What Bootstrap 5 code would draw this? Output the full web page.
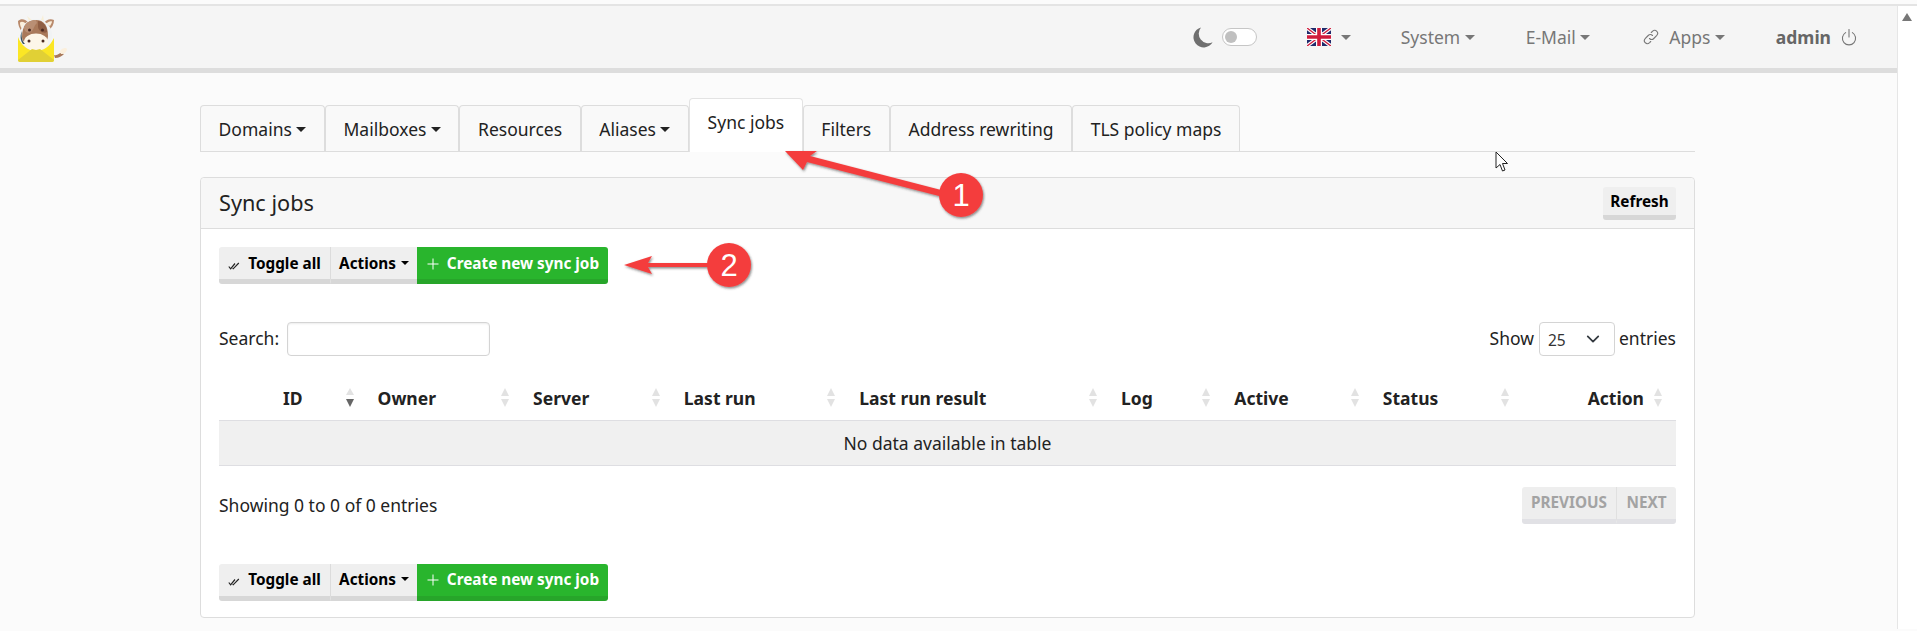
<!DOCTYPE html>
<html lang="en">
<head>
<meta charset="utf-8">
<title>Sync jobs</title>
<link href="https://cdn.jsdelivr.net/npm/bootstrap@5.3.0/dist/css/bootstrap.min.css" rel="stylesheet">
<style>
html,body{height:631px;overflow:hidden;}
body{font-family:"Noto Sans",sans-serif;font-size:17.5px;color:#222;background:#fbfbfb;padding-top:4px;position:relative;}
.shell{border-top:2px solid #e4e4e4;height:625px;}
.pagecol{width:1897px;}
.sbar{width:20px;background:#fff;border-left:1px solid #e6e6e6;padding-top:7px;}
.sbar-up{width:0;height:0;border-left:5.5px solid transparent;border-right:5.5px solid transparent;border-bottom:8px solid #777;margin-left:4px;}
.topbar{height:67px;background:#f5f5f5;border-bottom:5px solid #ddd;padding:0;}
.topbar .navbar-nav .nav-link{color:#777;padding:0;line-height:22px;}
.logo{margin-left:16px;display:block;}
.navright{margin-right:40px;}
.moon{margin-right:9px;}
.fake-toggle{width:35px;height:18px;border:1.5px solid #c6c6c6;border-radius:9px;background:#fff;padding:2px;margin-right:50px;}
.fake-toggle i{display:block;width:12px;height:12px;border-radius:50%;background:#c0c0c0;}
.flagwrap{margin-right:50px;}
.flagwrap .dropdown-toggle::after{margin-left:10px;vertical-align:.15em;border-top-width:5.5px;border-left-width:5px;border-right-width:5px;}
.m-sys{margin-right:51px;}
.m-mail{margin-right:53px;}
.m-apps{margin-right:51px;}
.apps-ico{margin-right:10px;}
.power-ico{margin-left:10px;}
.topbar .navbar-nav .adm{font-weight:700;color:#666;}
.tabs-wrap{margin:33px 202px 0 200px;}
.tabs-line{border-bottom:1px solid #ddd;height:46px;gap:0;align-items:flex-end;flex-wrap:nowrap;}
.tabs-line .nav-link{height:46px;padding:0 17.6px;line-height:46px;background:#f9f9f9;border:1px solid #ddd;border-bottom:0;border-radius:4px 4px 0 0;color:#222;margin:0;white-space:nowrap;}
.tabs-line .nav-link.active{height:54px;margin-bottom:-1px;background:#fff;padding-bottom:8px;color:#222;border-color:#e3e3e3;}
.panel{margin-top:25px;border:1px solid #ddd;border-radius:4px;background:#fff;height:441px;}
.panel-head{height:51px;background:#f7f7f7;border-bottom:1px solid #ddd;padding:9px 18px 0;border-radius:4px 4px 0 0;}
.panel-title{font-size:21.7px;line-height:32px;margin:0;font-weight:400;}
.panel-main{padding:18px 18px 0;}
.tb{font-weight:700;font-size:15.3px;line-height:31px;height:37px;padding:0 10px;border:0;border-bottom:5px solid #d7d7d7;background:#efefef;color:#000;border-radius:0;white-space:nowrap;}
.tb:hover{background:#efefef;color:#000;border-bottom-color:#d7d7d7;}
.tb-solo{height:33px;line-height:26px;padding:0;width:73px;border-radius:3px;}
.tb-first{border-radius:3px 0 0 3px;border-right:1px solid #dcdcdc;width:112px;padding:0 0 0 0;}
.tb-actions{width:86px;padding:0;}
.tb-actions.dropdown-toggle::after{margin-left:5px;}
.tb-green{background:#29b52d;border-bottom-color:#27a52a;color:#fff;border-radius:0 3px 3px 0;width:191px;padding:0 0 0 1px;}
.tb-green:hover{background:#29b52d;border-bottom-color:#27a52a;color:#fff;}
.tb svg{vertical-align:-1px;}
.filters{margin-top:38px;height:34px;}
.filter-cap{margin-bottom:2px;}
.filter-in{width:203px;height:34px;padding:2px 8px;margin-left:8px;border-color:#d4d4d4;border-radius:4px;background:#fff;box-shadow:inset 0 1px 2px rgba(0,0,0,.08);}
.filter-sel{width:76px;height:34px;margin:0 4px 0 5px;font-size:15.5px;padding:5px 8px;line-height:24px;border-color:#d4d4d4;border-radius:4px;background-position:right 12px center;background-size:18px 14px;color:#333;font-family:"Noto Sans",sans-serif;}
.jobs{margin:22px 0 0;table-layout:fixed;width:1457px;}
.jobs th{font-weight:700;height:42px;padding:0 14px 2px 10px;border-bottom:1px solid #dedee2;vertical-align:middle;background:transparent;color:#222;}
.jobs td{height:45px;background:#f0f0f0;text-align:center;border-bottom:1px solid #dedee2;padding:2px 0 0;vertical-align:middle;color:#222;box-shadow:none;}
.thin{display:flex;align-items:center;justify-content:space-between;}
.thin-end{justify-content:flex-end;gap:10px;}
.sortmark{display:block;flex:none;}
.foot{margin-top:21px;height:37px;}
.pg{font-weight:700;font-size:15.3px;height:37px;border-bottom:5px solid #e1e1e5;background:#eee;color:#a3a3a3;line-height:30px;text-align:center;}
.pg-prev{width:95px;border-radius:3px 0 0 3px;border-right:1px solid #e0e0e0;}
.pg-next{width:59px;border-radius:0 3px 3px 0;}
.bottom-btns{margin-top:40px;}
.overlay{position:absolute;left:0;top:0;pointer-events:none;}
.marker{font-family:"Liberation Sans",sans-serif;font-size:31px;fill:#fff;text-anchor:middle;}
</style>
</head>
<body>
<div class="shell d-flex">
  <div class="pagecol">
    <nav class="navbar navbar-expand topbar">
      <a class="navbar-brand p-0 m-0" href="#" aria-label="mailcow">
        <svg class="logo" width="52" height="56" viewBox="16 8 52 56">
          <path d="M22 31 C19 27 18 23 18 20 C21 17 25 18 28 21 L26 30Z" fill="#b98a6c"/>
          <path d="M22 28 C20 25 20 23 20 21.5 C22 20 24 21 26 23Z" fill="#fbefdc"/>
          <path d="M48 30 C52 27 54 23 54 19 C50 17 46 19 44 22Z" fill="#b98a6c"/>
          <path d="M50 25 C51 23 52 22 52 20.5 C50 20 48 21 46 23Z" fill="#fbefdc"/>
          <path d="M29 20 L27 15 L32 19Z M41 19 L43 14 L44 20Z" fill="#f8efd8"/>
          <circle cx="36" cy="34" r="16" fill="#f1f3f4"/>
          <path d="M22 36 C22 24 28 19 36 19 C44 19 48 25 48 35 C48 41 42 44 36 44 C29 44 22 42 22 36Z" fill="#a9795a"/>
          <path d="M36 19 C31 19 26 21 24 26 C24 30 27 33 31 31 C34 29 34 24 37 22Z" fill="#b98f74"/>
          <path d="M38 20 C42 20 47 24 47 31 C43 33 39 30 38 26Z" fill="#8f5e44"/>
          <ellipse cx="36" cy="41" rx="12" ry="8.5" fill="#fdf6e8"/>
          <path d="M22 30 C21 35 22 40 25 43 L23 43 C20 39 20 34 22 30Z" fill="#3d5560"/>
          <circle cx="29.5" cy="29" r="1.5" fill="#4a2a22"/><circle cx="42.5" cy="29" r="1.5" fill="#4a2a22"/>
          <circle cx="29" cy="40" r="1.5" fill="#4a2a22"/><circle cx="43" cy="40" r="1.5" fill="#4a2a22"/>
          <path d="M54 54 C58 55 59 52 61 52 L64 53 C62 55 59 57 55 57Z" fill="#a9795a"/>
          <path d="M60 50 C62 47 66 46 67 48 C67 51 64 53 61 53Z" fill="#fbefdc"/>
          <path d="M18 36 C21 44 28 50 36 50 C44 50 50 45 54 37 L54 59 C54 60 53 61 52 61 L20 61 C19 61 18 60 18 59Z" fill="#fbe625"/>
          <path d="M18 59 L32 48 L36 49 L40 48 L54 59 C54 60 53 61 52 61 L20 61 C19 61 18 60 18 59Z" fill="#e1d035"/>
        </svg>
      </a>
      <div class="navbar-nav ms-auto align-items-center navright">
        <svg class="moon" width="21" height="21" viewBox="0 0 21 21"><path d="M9 .4 A10.2 10.2 0 1 0 20.6 15.2 A9.6 9.6 0 0 1 9 .4Z" fill="#6f6f6f"/></svg>
        <div class="fake-toggle"><i></i></div>
        <div class="nav-item flagwrap">
          <a class="nav-link dropdown-toggle d-flex align-items-center" href="#" aria-label="English">
            <svg width="24" height="18" viewBox="0 0 60 45">
              <rect width="60" height="45" fill="#1f2a6b"/>
              <path d="M0 0 L60 45 M60 0 L0 45" stroke="#fff" stroke-width="9"/>
              <path d="M0 0 L60 45 M60 0 L0 45" stroke="#cf1b3c" stroke-width="3.5"/>
              <path d="M30 0 V45 M0 22.5 H60" stroke="#fff" stroke-width="15"/>
              <path d="M30 0 V45 M0 22.5 H60" stroke="#cf1b3c" stroke-width="9"/>
            </svg>
          </a>
        </div>
        <div class="nav-item m-sys"><a class="nav-link dropdown-toggle" href="#">System</a></div>
        <div class="nav-item m-mail"><a class="nav-link dropdown-toggle" href="#">E-Mail</a></div>
        <div class="nav-item m-apps d-flex align-items-center">
          <a class="nav-link dropdown-toggle d-flex align-items-center" href="#">
            <svg class="apps-ico" width="16" height="16" viewBox="0 0 16 16" fill="none" stroke="#777" stroke-width="1.1" stroke-linecap="round"><path d="M6.5 9.5 C8 11 9.500 10.800 10.800 9.500 L13.600 6.700 C15 5.200 15 3.500 13.800 2.300 C12.500 1 10.800 1.100 9.400 2.400 L8.300 3.500"/><path d="M9.500 6.500 C8 5 6.500 5.200 5.200 6.500 L2.400 9.300 C1 10.800 1 12.500 2.200 13.700 C3.500 15 5.200 14.900 6.600 13.600 L7.700 12.500"/></svg>
            <span>Apps</span>
          </a>
        </div>
        <div class="nav-item d-flex align-items-center">
          <a class="nav-link adm d-flex align-items-center" href="#">admin
            <svg class="power-ico" width="16" height="18" viewBox="0 0 16 18" fill="none" stroke="#777" stroke-width="1.1" stroke-linecap="round"><path d="M4.6 4.6 A6.6 6.6 0 1 0 11.4 4.6"/><path d="M8 1.5 V9"/></svg>
          </a>
        </div>
      </div>
    </nav>

    <main class="tabs-wrap">
      <ul class="nav tabs-line">
        <li class="nav-item"><a class="nav-link dropdown-toggle" href="#">Domains</a></li>
        <li class="nav-item"><a class="nav-link dropdown-toggle" href="#">Mailboxes</a></li>
        <li class="nav-item"><a class="nav-link" href="#">Resources</a></li>
        <li class="nav-item"><a class="nav-link dropdown-toggle" href="#">Aliases</a></li>
        <li class="nav-item"><a class="nav-link active" href="#">Sync jobs</a></li>
        <li class="nav-item"><a class="nav-link" href="#">Filters</a></li>
        <li class="nav-item"><a class="nav-link" href="#">Address rewriting</a></li>
        <li class="nav-item"><a class="nav-link" href="#">TLS policy maps</a></li>
      </ul>

      <section class="panel">
        <header class="panel-head d-flex justify-content-between">
          <h2 class="panel-title">Sync jobs</h2>
          <button class="btn tb tb-solo" type="button">Refresh</button>
        </header>
        <div class="panel-main">
          <div class="d-flex">
            <button class="btn tb tb-first" type="button"><svg class="me-1" width="12" height="8" viewBox="0 0 12 8" fill="none" stroke="#222" stroke-width="1.2"><path d="M.8 4.5 L2.6 6.8 L7 1.5"/><path d="M4.6 6.3 L5.2 6.8 L10.8 1"/></svg> Toggle all</button>
            <button class="btn tb tb-actions dropdown-toggle" type="button">Actions</button>
            <button class="btn tb tb-green" type="button"><svg class="me-1" width="12" height="12" viewBox="0 0 12 12" stroke="#fff" stroke-width="1"><path d="M6 .5 V11.5 M.5 6 H11.5"/></svg> Create new sync job</button>
          </div>

          <div class="filters d-flex justify-content-between align-items-center">
            <label class="d-flex align-items-center"><span class="filter-cap">Search:</span><input class="form-control filter-in" type="search" aria-label="Search"></label>
            <label class="d-flex align-items-center"><span class="filter-cap">Show</span><select class="form-select filter-sel" aria-label="Entries"><option>25</option></select><span class="filter-cap">entries</span></label>
          </div>

          <table class="table jobs">
            <colgroup>
              <col style="width:54px"><col style="width:94.5px"><col style="width:155.5px"><col style="width:150.7px"><col style="width:175.3px"><col style="width:261.7px"><col style="width:113.3px"><col style="width:148.5px"><col style="width:150.5px"><col style="width:152.5px">
            </colgroup>
            <thead>
              <tr>
                <th></th>
                <th><div class="thin">ID<svg class="sortmark" width="8" height="19" viewBox="0 0 8 19"><path d="M4 0 L8 7 H0Z" fill="#e2e2e2"/><path d="M4 19 L8 11 H0Z" fill="#666"/></svg></div></th>
                <th><div class="thin">Owner<svg class="sortmark" width="8" height="19" viewBox="0 0 8 19"><path d="M4 0 L8 8 H0Z" fill="#e2e2e2"/><path d="M4 19 L8 11 H0Z" fill="#e2e2e2"/></svg></div></th>
                <th><div class="thin">Server<svg class="sortmark" width="8" height="19" viewBox="0 0 8 19"><path d="M4 0 L8 8 H0Z" fill="#e2e2e2"/><path d="M4 19 L8 11 H0Z" fill="#e2e2e2"/></svg></div></th>
                <th><div class="thin">Last run<svg class="sortmark" width="8" height="19" viewBox="0 0 8 19"><path d="M4 0 L8 8 H0Z" fill="#e2e2e2"/><path d="M4 19 L8 11 H0Z" fill="#e2e2e2"/></svg></div></th>
                <th><div class="thin">Last run result<svg class="sortmark" width="8" height="19" viewBox="0 0 8 19"><path d="M4 0 L8 8 H0Z" fill="#e2e2e2"/><path d="M4 19 L8 11 H0Z" fill="#e2e2e2"/></svg></div></th>
                <th><div class="thin">Log<svg class="sortmark" width="8" height="19" viewBox="0 0 8 19"><path d="M4 0 L8 8 H0Z" fill="#e2e2e2"/><path d="M4 19 L8 11 H0Z" fill="#e2e2e2"/></svg></div></th>
                <th><div class="thin">Active<svg class="sortmark" width="8" height="19" viewBox="0 0 8 19"><path d="M4 0 L8 8 H0Z" fill="#e2e2e2"/><path d="M4 19 L8 11 H0Z" fill="#e2e2e2"/></svg></div></th>
                <th><div class="thin">Status<svg class="sortmark" width="8" height="19" viewBox="0 0 8 19"><path d="M4 0 L8 8 H0Z" fill="#e2e2e2"/><path d="M4 19 L8 11 H0Z" fill="#e2e2e2"/></svg></div></th>
                <th><div class="thin thin-end">Action<svg class="sortmark" width="8" height="19" viewBox="0 0 8 19"><path d="M4 0 L8 8 H0Z" fill="#e2e2e2"/><path d="M4 19 L8 11 H0Z" fill="#e2e2e2"/></svg></div></th>
              </tr>
            </thead>
            <tbody><tr><td colspan="10">No data available in table</td></tr></tbody>
          </table>

          <div class="foot d-flex justify-content-between align-items-center">
            <div>Showing 0 to 0 of 0 entries</div>
            <div class="d-flex"><div class="pg pg-prev">PREVIOUS</div><div class="pg pg-next">NEXT</div></div>
          </div>

          <div class="d-flex bottom-btns">
            <button class="btn tb tb-first" type="button"><svg class="me-1" width="12" height="8" viewBox="0 0 12 8" fill="none" stroke="#222" stroke-width="1.2"><path d="M.8 4.5 L2.6 6.8 L7 1.5"/><path d="M4.6 6.3 L5.2 6.8 L10.8 1"/></svg> Toggle all</button>
            <button class="btn tb tb-actions dropdown-toggle" type="button">Actions</button>
            <button class="btn tb tb-green" type="button"><svg class="me-1" width="12" height="12" viewBox="0 0 12 12" stroke="#fff" stroke-width="1"><path d="M6 .5 V11.5 M.5 6 H11.5"/></svg> Create new sync job</button>
          </div>
        </div>
      </section>
    </main>
  </div>
  <div class="sbar"><div class="sbar-up"></div></div>
</div>

<svg class="overlay" width="1917" height="631" viewBox="0 0 1917 631">
  <defs><filter id="sh" x="-10%" y="-30%" width="120%" height="160%"><feDropShadow dx="1" dy="1.5" stdDeviation="1" flood-color="#333" flood-opacity=".55"/></filter></defs>
  <g filter="url(#sh)">
    <path d="M785 151 L817 151 L810 156 L945 191 L943 197 L807 162 L803 170Z" fill="#f43e3e"/>
    <circle cx="961" cy="195" r="22" fill="#f43e3e"/>
    <path d="M624 265 L652 256 L648 263 L712 263 L712 267 L648 267 L652 274Z" fill="#f43e3e"/>
    <circle cx="729" cy="265" r="22" fill="#f43e3e"/>
  </g>
  <text class="marker" x="961" y="206">1</text>
  <text class="marker" x="729" y="276">2</text>
  <path d="M1496 152 V168 L1500 164.5 L1502.5 171 L1505 170 L1502.5 163.5 L1507.500 163.500Z" fill="#fff" stroke="#222" stroke-width="1"/>
</svg>
</body>
</html>
